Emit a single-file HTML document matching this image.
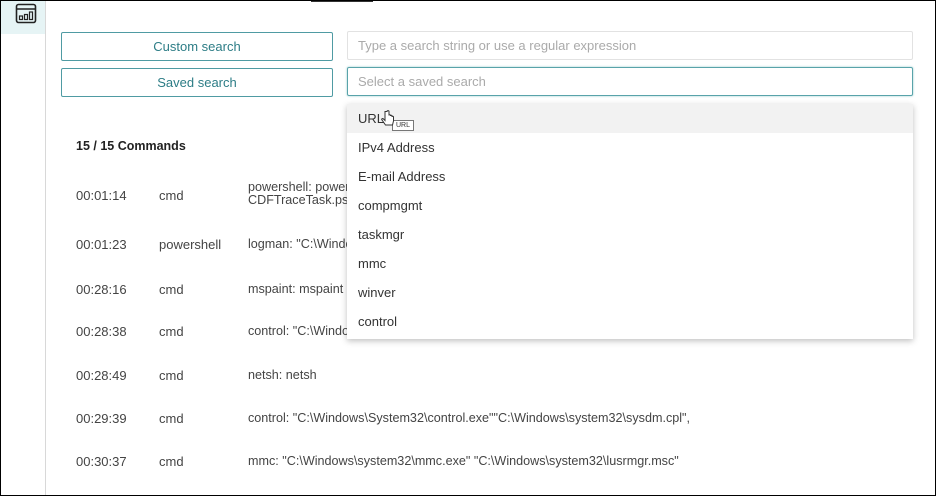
<!DOCTYPE html>
<html><head><meta charset="utf-8"><style>
*{box-sizing:border-box;margin:0;padding:0}
body{width:936px;height:496px;position:relative;overflow:hidden;background:#fff;font-family:"Liberation Sans",sans-serif;color:#333}
.frame{position:absolute;inset:0;border:1px solid #000;z-index:20;pointer-events:none}
.side{position:absolute;left:0;top:0;width:46px;height:496px;border-right:1px solid #d8d8d8}
.iconbox{position:absolute;left:1px;top:1px;width:44px;height:33px;background:#e6f4f5}
.topline{position:absolute;left:311px;top:0;width:62px;height:2px;background:#333}
.btn{position:absolute;left:61px;width:272px;height:29px;border:1px solid #4f9ba3;border-radius:2px;color:#2d7d86;font-size:13px;text-align:center;line-height:27px}
.inp{position:absolute;left:347px;width:566px;height:29px;border:1px solid #e2e2e2;border-radius:2px;color:#aaa;font-size:13px;line-height:27px;padding-left:10px}
.inp2{border:1px solid #59a3aa;box-shadow:0 0 2px #9cc}
.title{position:absolute;left:76px;top:139px;font-size:12.5px;font-weight:bold;color:#222}
.row{position:absolute;font-size:13px;color:#444}
.t{left:76px}.p{left:159px}.c{left:248px;font-size:12.6px}
.dd{position:absolute;left:347px;top:104px;width:566px;height:235px;background:#fff;box-shadow:0 2px 6px rgba(0,0,0,.25);z-index:5}
.dd div{height:29px;line-height:29px;padding-left:11px;font-size:13px;color:#333}
.dd .h{background:#f2f2f2}
.tip{position:absolute;left:392px;top:120px;border:1px solid #777;background:#fff;font-size:7px;padding:1px 3px;color:#333}
</style></head><body>
<div class="frame"></div>
<div class="side"><div class="iconbox">
<svg width="44" height="33" viewBox="0 0 44 33"><rect x="15.5" y="3.5" width="19" height="18" rx="2" fill="none" stroke="#222" stroke-width="1.6"/><line x1="15.5" y1="8" x2="34.5" y2="8" stroke="#222" stroke-width="1.6"/><rect x="18.5" y="15" width="3" height="3.5" fill="none" stroke="#222" stroke-width="1.2"/><rect x="23.5" y="13.5" width="3" height="5" fill="none" stroke="#222" stroke-width="1.2"/><rect x="28.5" y="11" width="3" height="7.5" fill="none" stroke="#222" stroke-width="1.2"/></svg>
</div></div>
<div class="topline"></div>
<div class="btn" style="top:32px">Custom search</div>
<div class="btn" style="top:68px">Saved search</div>
<div class="inp" style="top:31px">Type a search string or use a regular expression</div>
<div class="inp inp2" style="top:67px">Select a saved search</div>
<div class="title">15 / 15 Commands</div>
<div class="row t" style="top:188px">00:01:14</div><div class="row p" style="top:188px">cmd</div><div class="row c" style="top:181px;line-height:13px">powershell: powershell<br>CDFTraceTask.ps1</div>
<div class="row t" style="top:237px">00:01:23</div><div class="row p" style="top:237px">powershell</div><div class="row c" style="top:237px">logman: "C:\Windows</div>
<div class="row t" style="top:282px">00:28:16</div><div class="row p" style="top:282px">cmd</div><div class="row c" style="top:282px">mspaint: mspaint</div>
<div class="row t" style="top:324px">00:28:38</div><div class="row p" style="top:324px">cmd</div><div class="row c" style="top:324px">control: "C:\Windows</div>
<div class="row t" style="top:368px">00:28:49</div><div class="row p" style="top:368px">cmd</div><div class="row c" style="top:368px">netsh: netsh</div>
<div class="row t" style="top:411px">00:29:39</div><div class="row p" style="top:411px">cmd</div><div class="row c" style="top:411px">control: "C:\Windows\System32\control.exe""C:\Windows\system32\sysdm.cpl",</div>
<div class="row t" style="top:454px">00:30:37</div><div class="row p" style="top:454px">cmd</div><div class="row c" style="top:454px">mmc: "C:\Windows\system32\mmc.exe" "C:\Windows\system32\lusrmgr.msc"</div>
<div class="dd">
<div class="h">URL</div><div>IPv4 Address</div><div>E-mail Address</div><div>compmgmt</div><div>taskmgr</div><div>mmc</div><div>winver</div><div>control</div>
</div>
<div class="tip" style="z-index:6">URL</div>
<svg style="position:absolute;left:381px;top:110px;z-index:7" width="14" height="18" viewBox="0 0 14 18"><path d="M4 1.5v9l-1.5-1.5c-1-1-2.5 0-1.5 1l3.5 5h7l1-4v-4c0-1-1.5-1-1.5 0v-1c0-1-1.5-1-1.5 0v-.5c0-1-1.5-1-1.5 0V1.5c0-1.2-2-1.2-2 0z" fill="#fff" stroke="#333" stroke-width="1"/></svg>
</body></html>
